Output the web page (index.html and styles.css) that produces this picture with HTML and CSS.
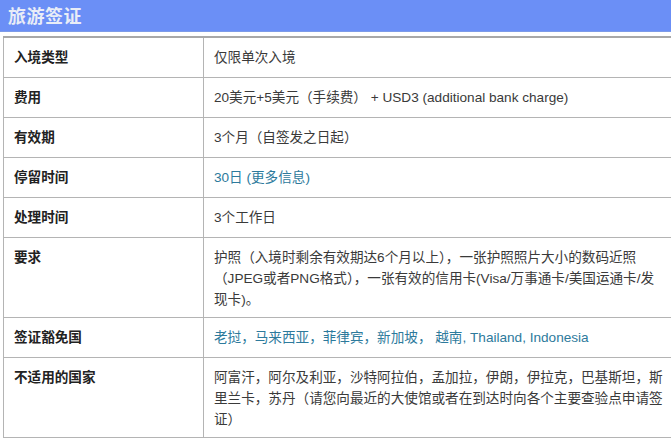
FILE: index.html
```html
<!DOCTYPE html>
<html lang="zh-CN">
<head>
<meta charset="utf-8">
<title>旅游签证</title>
<link rel="stylesheet" href="styles.css">
</head>
<body>
<div class="title-bar"><h1 class="title">旅游签证</h1></div>
<table class="visa">
  <tr><th>入境类型</th><td>仅限单次入境</td></tr>
  <tr><th>费用</th><td>20美元+5美元（手续费）&nbsp;+ USD3 (additional bank charge)</td></tr>
  <tr><th>有效期</th><td>3个月（自签发之日起）</td></tr>
  <tr><th>停留时间</th><td class="link">30日 (更多信息)</td></tr>
  <tr><th>处理时间</th><td>3个工作日</td></tr>
  <tr><th>要求</th><td>护照（入境时剩余有效期达6个月以上），一张护照照片大小的数码近照（JPEG或者PNG格式），一张有效的信用卡(Visa/万事通卡/美国运通卡/发现卡)。</td></tr>
  <tr><th>签证豁免国</th><td class="link">老挝，马来西亚，菲律宾，新加坡，&nbsp;越南, Thailand, Indonesia</td></tr>
  <tr><th>不适用的国家</th><td>阿富汗，阿尔及利亚，沙特阿拉伯，孟加拉，伊朗，伊拉克，巴基斯坦，斯里兰卡，苏丹（请您向最近的大使馆或者在到达时向各个主要查验点申请签证）</td></tr>
</table>
</body>
</html>
```
FILE: styles.css
```css
html, body {
  margin: 0;
  padding: 0;
  background: #fff;
}
body {
  width: 671px;
  overflow: hidden;
  font-family: "Liberation Sans", "Noto Sans CJK SC", sans-serif;
}
.title-bar {
  background: #6b8ff6;
  height: 31px;
  display: flex;
  align-items: center;
  padding-left: 8px;
  border-bottom: 1px solid #7d9be8;
}
.title {
  margin: 0 0 2px;
  font-size: 18px;
  font-weight: bold;
  color: #e9edf7;
  letter-spacing: 0.5px;
  font-family: "Noto Sans CJK SC", sans-serif;
}
.visa {
  margin: 4px 0 0 3px;
  width: 672px;
  border-collapse: collapse;
  table-layout: fixed;
  font-size: 13.6px;
  line-height: 21px;
  color: #333;
}
.visa th, .visa td {
  border: 1px solid #b4b4b4;
  padding: 9px 10px 7px;
  height: 23px;
  vertical-align: top;
  text-align: left;
}
.visa tr:first-child th, .visa tr:first-child td {
  border-top: 2px solid #a8a8a8;
}
.visa th {
  width: 179px;
  font-weight: bold;
  color: #222;
}
.visa td {
  color: #3a3a3a;
}
.visa td.link {
  color: #2d7a9c;
}
```
